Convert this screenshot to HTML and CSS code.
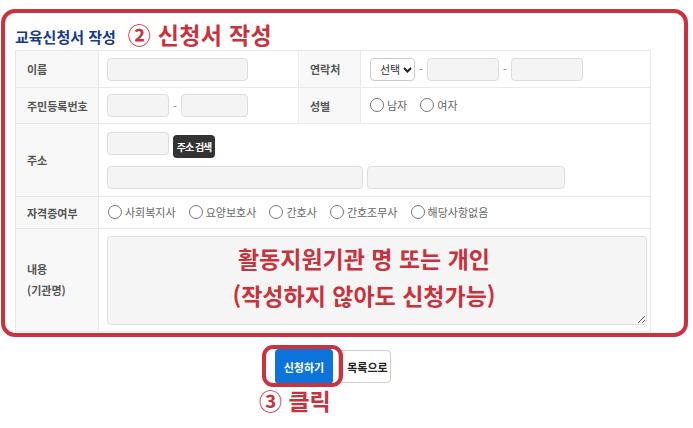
FILE: index.html
```html
<!DOCTYPE html>
<html lang="ko">
<head>
  <meta charset="UTF-8" />
  <meta name="viewport" content="width=device-width, initial-scale=1.0"/>
  <title>교육신청서 작성</title>
  <link rel="stylesheet" href="styles.css">
</head>
<body>

  <div class="form-frame">
    <div class="form-title">
      <h2>교육신청서 작성</h2>
      <span class="note note-title">② 신청서 작성</span>
    </div>

    <table class="apply-table">
      <colgroup>
        <col class="col-label">
        <col class="col-value">
        <col class="col-label2">
        <col>
      </colgroup>
      <tr class="row-name">
        <th>이름</th>
        <td><input type="text" class="input input-name"></td>
        <th>연락처</th>
        <td>
          <div class="field-group">
            <span class="select-box">
              <select class="select-phone">
                <option>선택</option>
              </select>
              <svg class="select-arrow" width="9" height="6" viewBox="0 0 9 6"><path d="M1 1l3.5 3.5L8 1" fill="none" stroke="#222" stroke-width="2"/></svg>
            </span>
            <span class="dash">-</span>
            <input type="text" class="input input-phone">
            <span class="dash">-</span>
            <input type="text" class="input input-phone">
          </div>
        </td>
      </tr>
      <tr class="row-id">
        <th>주민등록번호</th>
        <td>
          <div class="field-group">
            <input type="text" class="input input-id1">
            <span class="dash">-</span>
            <input type="text" class="input input-id2">
          </div>
        </td>
        <th>성별</th>
        <td>
          <label class="radio"><input type="radio" name="gender">남자</label>
          <label class="radio"><input type="radio" name="gender">여자</label>
        </td>
      </tr>
      <tr class="row-addr">
        <th>주소</th>
        <td colspan="3">
          <div class="addr-line">
            <input type="text" class="input input-zip">
            <button class="btn-search">주소 검색</button>
          </div>
          <div class="addr-line">
            <input type="text" class="input input-addr1">
            <input type="text" class="input input-addr2">
          </div>
        </td>
      </tr>
      <tr class="row-cert">
        <th>자격증여부</th>
        <td colspan="3">
          <label class="radio"><input type="radio" name="cert">사회복지사</label>
          <label class="radio"><input type="radio" name="cert">요양보호사</label>
          <label class="radio"><input type="radio" name="cert">간호사</label>
          <label class="radio"><input type="radio" name="cert">간호조무사</label>
          <label class="radio"><input type="radio" name="cert">해당사항없음</label>
        </td>
      </tr>
      <tr class="row-memo">
        <th>내용<br>(기관명)</th>
        <td colspan="3">
          <textarea class="memo">활동지원기관 명 또는 개인
(작성하지 않아도 신청가능)</textarea>
        </td>
      </tr>
    </table>
  </div>

  <div class="btn-area">
    <span class="btn-wrap">
      <button class="btn-submit">신청하기</button>
      <span class="click-ring"></span>
    </span>
    <button class="btn-list">목록으로</button>
  </div>
  <div class="note note-click">③ 클릭</div>

</body>
</html>
```

FILE: styles.css
```css
body {
  font-family: "Noto Sans CJK KR", "Noto Sans", sans-serif;
  background-color: #fff;
  margin: 0;
  padding: 0;
  color: #555;
}
.form-frame {
  margin: 9px 5px 0 1px;
  border: 4px solid #c8333d;
  border-radius: 14px;
  padding: 0 33px 1px 10px;
}
.form-title {
  display: flex;
  align-items: flex-end;
  height: 37px;
}
.form-title h2 {
  margin: 0 0 4px 0;
  font-size: 15px;
  line-height: 18px;
  color: #173a8a;
}
.note {
  color: #c8323c;
  font-weight: bold;
  font-size: 23px;
}
.note-title {
  margin: 0 0 2px 12px;
  line-height: 28px;
  letter-spacing: 0.3px;
}
.apply-table {
  width: 636px;
  border-collapse: collapse;
  table-layout: fixed;
  border-top: 1px solid #e6e6e6;
}
.col-label { width: 83px; }
.col-value { width: 200px; }
.col-label2 { width: 62px; }
.apply-table th,
.apply-table td {
  border: 1px solid #e9e9e9;
  font-size: 11px;
  color: #555;
  text-align: left;
  vertical-align: middle;
}
.apply-table th {
  background: #f8f8f8;
  font-weight: bold;
  padding: 0 0 0 11px;
}
.apply-table td {
  padding: 0 0 0 8px;
}
.row-name { height: 37px; }
.row-id { height: 36px; }
.row-addr { height: 73px; }
.row-cert { height: 32px; }
.row-memo { height: 103px; }
.row-memo th {
  font-weight: bold;
  line-height: 21px;
}
.field-group {
  display: flex;
  align-items: center;
}
.input {
  box-sizing: border-box;
  height: 23px;
  border: 1px solid #dddddd;
  background: #f4f4f4;
  border-radius: 4px;
  vertical-align: middle;
  margin: 0;
  padding: 0 5px;
}
.input-name { width: 141px; }
.input-id1 { width: 62px; }
.input-id2 { width: 67px; }
.input-phone { width: 72px; }
.input-zip { width: 62px; }
.input-addr1 { width: 256px; }
.input-addr2 { width: 198px; }
.dash {
  width: 12px;
  text-align: center;
  color: #777;
}
.select-box {
  position: relative;
  display: inline-block;
  margin-left: 1px;
}
.select-phone {
  appearance: none;
  -webkit-appearance: none;
  display: block;
  box-sizing: border-box;
  width: 45px;
  height: 23px;
  font-size: 11px;
  font-family: inherit;
  border: 1px solid #ccc;
  border-radius: 4px;
  background: #fff;
  color: #333;
  margin: 0;
  padding: 0 0 0 9px;
}
.select-arrow {
  position: absolute;
  right: 3px;
  top: 9px;
}
.radio {
  display: inline-flex;
  align-items: center;
  margin-right: 9px;
  color: #666;
}
.radio input {
  width: 14px;
  height: 14px;
  margin: 0 3px 0 1px;
}
.addr-line {
  display: flex;
  align-items: flex-start;
  gap: 4px;
}
.addr-line + .addr-line {
  margin-top: 8px;
}
.btn-search {
  margin-top: 3px;
  height: 23px;
  width: 42px;
  padding: 0;
  border: none;
  border-radius: 4px;
  background: #333;
  color: #fff;
  font-family: inherit;
  font-size: 10px;
  font-weight: bold;
  letter-spacing: -1px;
}
.memo {
  display: block;
  box-sizing: border-box;
  width: 540px;
  height: 89px;
  margin: 0;
  border: 1px solid #dedede;
  border-radius: 4px;
  background: #f5f5f5;
  color: #c8323c;
  font-family: inherit;
  font-size: 23px;
  font-weight: bold;
  line-height: 37px;
  text-align: center;
  padding: 3px 26px 0 0;
  overflow: hidden;
}
.btn-area {
  margin-top: 12px;
  text-align: center;
  padding-right: 27px;
  font-size: 0;
}
.btn-wrap {
  position: relative;
  display: inline-block;
  vertical-align: middle;
}
.btn-submit {
  display: block;
  width: 58px;
  height: 35px;
  border: none;
  border-radius: 4px;
  background: #0b73d9;
  color: #fff;
  font-family: inherit;
  font-size: 11px;
  font-weight: bold;
}
.click-ring {
  position: absolute;
  top: -4px;
  bottom: -3px;
  left: -13px;
  right: -10px;
  border: 4px solid #c8333d;
  border-radius: 11px;
}
.btn-list {
  vertical-align: middle;
  margin-left: 5px;
  width: 53px;
  height: 33px;
  border: 1px solid #ccc;
  border-radius: 4px;
  background: #fff;
  color: #222;
  font-family: inherit;
  font-size: 11px;
  font-weight: bold;
  padding: 0 0 0 6px;
}
.note-click {
  margin: 1px 0 0 259px;
  line-height: 30px;
}
```
